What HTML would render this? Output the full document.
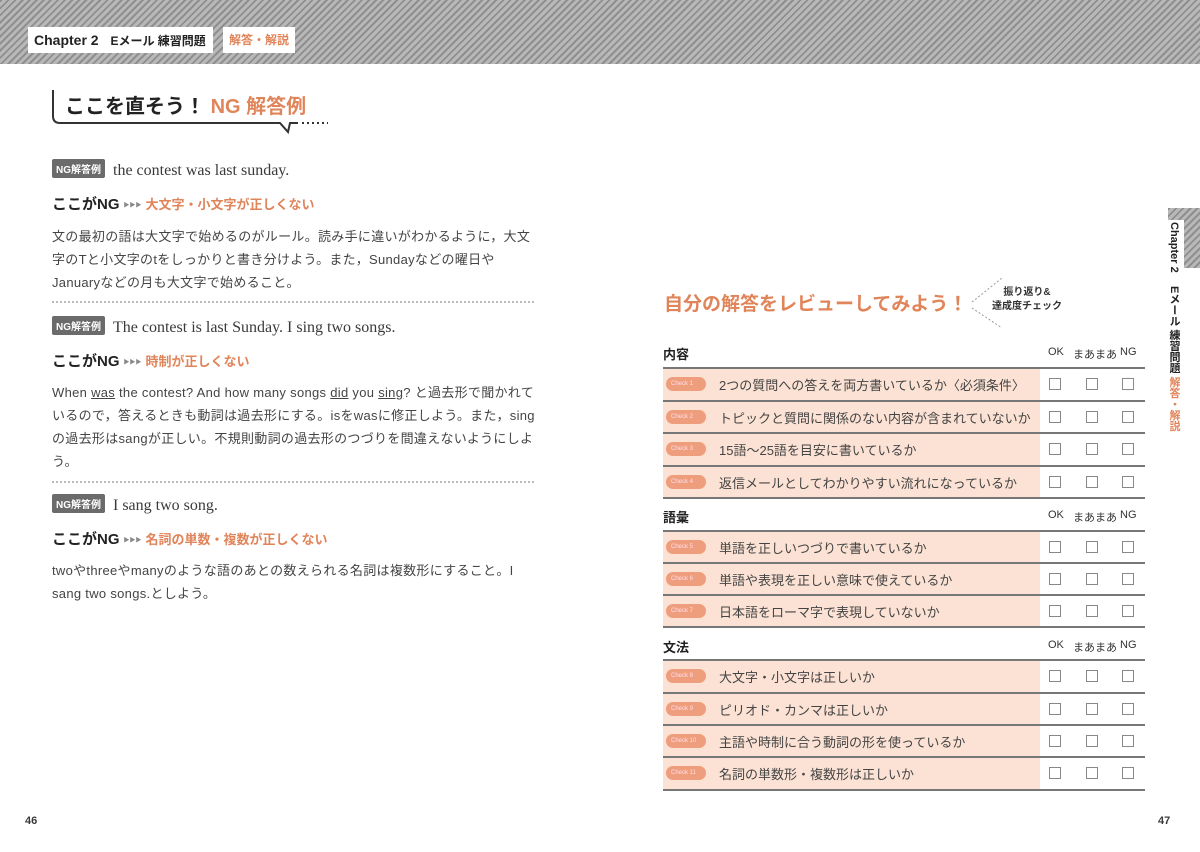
<!DOCTYPE html>
<html><head><meta charset="utf-8"><style>
*{margin:0;padding:0;box-sizing:border-box}
body{width:1200px;height:852px;background:#fff;position:relative;overflow:hidden;font-family:"Liberation Sans","Noto Sans CJK JP",sans-serif;color:#3a3a3a}
.hatch{background:repeating-linear-gradient(135deg,#8f8f8f 0 2px,#b8b8b8 2px 5px)}
.a{position:absolute;white-space:nowrap}
.or{color:#e0845a}
.tag{display:inline-block;background:#6b6b6b;color:#fff;font-size:10px;font-weight:bold;padding:2px 4px;border-radius:2px;margin-right:8px;vertical-align:2px}
.ser{font-family:"Liberation Serif","Noto Serif CJK SC",serif;font-size:16px}
.h{font-size:15px;font-weight:bold;color:#222}
.arr{font-size:6px;color:#888;letter-spacing:0;margin:0 4px;vertical-align:2px}
.p{font-size:13px;line-height:23px;width:486px;white-space:normal;color:#444;letter-spacing:.3px}
.dot{position:absolute;left:52px;width:482px;border-top:2px dotted #bbb}
.line{position:absolute;left:663px;width:482px;border-top:2px solid #777}
.peach{position:absolute;left:663px;width:377px;background:#fbe2d4}
.row{position:absolute;left:663px;height:32px;display:flex;align-items:center;font-size:13px;color:#444}
.ck{display:inline-block;width:40px;height:14px;border-radius:7px;background:#ee9e7c;margin:0 13px 0 3px;color:#fde;font-size:6px;line-height:14px;padding-left:5px}
.bx{position:absolute;width:12px;height:12px;border:1px solid #888}
.sec{position:absolute;left:663px;font-size:13px;font-weight:bold;color:#222}
.col{position:absolute;font-size:11px;color:#333}
</style></head><body>
<div class="a hatch" style="left:0;top:0;width:1200px;height:64px"></div>
<div class="a" style="left:28px;top:27px;width:185px;height:26px;background:#fff;font-size:14px;font-weight:bold;line-height:26px;padding-left:6px;color:#222">Chapter 2 <span style="font-size:12px;margin-left:8px">Eメール 練習問題</span></div>
<div class="a or" style="left:223px;top:27px;width:72px;height:26px;background:#fff;font-size:12px;font-weight:bold;line-height:26px;text-align:center">解答・解説</div>

<svg class="a" style="left:50px;top:88px" width="280" height="50"><path d="M3 2 V28 Q3 35 10 35 H230 L238 44 L240 35 H248" fill="none" stroke="#333" stroke-width="2"/><path d="M252 35 H278" stroke="#333" stroke-width="2" stroke-dasharray="2 3"/></svg>
<div class="a" style="left:65px;top:90px;font-size:20px;font-weight:bold;color:#222">ここを直そう！ <span class="or">NG 解答例</span></div>

<div class="a" style="left:52px;top:159px"><span class="tag">NG解答例</span><span class="ser">the contest was last sunday.</span></div>
<div class="a h" style="left:52px;top:193px">ここがNG<span class="arr">▶▶▶</span><span class="or" style="font-size:13px">大文字・小文字が正しくない</span></div>
<div class="a p" style="left:52px;top:225px">文の最初の語は大文字で始めるのがルール。読み手に違いがわかるように，大文字のTと小文字のtをしっかりと書き分けよう。また，Sundayなどの曜日やJanuaryなどの月も大文字で始めること。</div>
<div class="dot" style="top:301px"></div>

<div class="a" style="left:52px;top:316px"><span class="tag">NG解答例</span><span class="ser">The contest is last Sunday. I sing two songs.</span></div>
<div class="a h" style="left:52px;top:350px">ここがNG<span class="arr">▶▶▶</span><span class="or" style="font-size:13px">時制が正しくない</span></div>
<div class="a p" style="left:52px;top:381px">When <u>was</u> the contest? And how many songs <u>did</u> you <u>sing</u>? と過去形で聞かれているので，答えるときも動詞は過去形にする。isをwasに修正しよう。また，singの過去形はsangが正しい。不規則動詞の過去形のつづりを間違えないようにしよう。</div>
<div class="dot" style="top:481px"></div>

<div class="a" style="left:52px;top:494px"><span class="tag">NG解答例</span><span class="ser">I sang two song.</span></div>
<div class="a h" style="left:52px;top:528px">ここがNG<span class="arr">▶▶▶</span><span class="or" style="font-size:13px">名詞の単数・複数が正しくない</span></div>
<div class="a p" style="left:52px;top:559px">twoやthreeやmanyのような語のあとの数えられる名詞は複数形にすること。I sang two songs.としよう。</div>

<div class="a" style="left:25px;top:815px;font-size:11px;font-weight:bold">46</div>
<div class="a" style="left:1158px;top:815px;font-size:11px;font-weight:bold">47</div>

<div class="a hatch" style="left:1168px;top:208px;width:32px;height:60px"></div>
<div class="a" style="left:1164px;top:220px;width:20px;height:50px;background:#fff"></div>
<div class="a" style="left:1166px;top:222px;writing-mode:vertical-rl;font-size:11px;font-weight:bold;color:#222">Chapter 2 <span style="margin-top:10px;display:inline-block">Eメール 練習問題</span> <span class="or">解答・解説</span></div>

<div class="a or" style="left:664px;top:289px;font-size:19px;font-weight:bold">自分の解答をレビューしてみよう！</div>
<svg class="a" style="left:970px;top:274px" width="40" height="60"><path d="M2 28 L32 4 M2 34 L32 54" stroke="#999" stroke-dasharray="2 2"/></svg>
<div class="a" style="left:992px;top:286px;font-size:10px;font-weight:bold;line-height:14px;text-align:center;color:#333">振り返り&amp;<br>達成度チェック</div>

<div class="sec" style="top:344px">内容</div>
<div class="col" style="left:1048px;top:346px">OK</div><div class="col" style="left:1073px;top:346px">まあまあ</div><div class="col" style="left:1120px;top:346px">NG</div>
<div class="peach" style="top:369px;height:129px"></div>
<div class="line" style="top:367px"></div>
<div class="row" style="top:368px"><span class="ck">Check 1</span>2つの質問への答えを両方書いているか〈必須条件〉</div>
<div class="line" style="top:400px"></div>
<div class="row" style="top:401px"><span class="ck">Check 2</span>トピックと質問に関係のない内容が含まれていないか</div>
<div class="line" style="top:432px"></div>
<div class="row" style="top:433px"><span class="ck">Check 3</span>15語～25語を目安に書いているか</div>
<div class="line" style="top:465px"></div>
<div class="row" style="top:466px"><span class="ck">Check 4</span>返信メールとしてわかりやすい流れになっているか</div>
<div class="line" style="top:497px"></div>

<div class="sec" style="top:507px">語彙</div>
<div class="col" style="left:1048px;top:509px">OK</div><div class="col" style="left:1073px;top:509px">まあまあ</div><div class="col" style="left:1120px;top:509px">NG</div>
<div class="peach" style="top:532px;height:95px"></div>
<div class="line" style="top:530px"></div>
<div class="row" style="top:531px"><span class="ck">Check 5</span>単語を正しいつづりで書いているか</div>
<div class="line" style="top:562px"></div>
<div class="row" style="top:563px"><span class="ck">Check 6</span>単語や表現を正しい意味で使えているか</div>
<div class="line" style="top:594px"></div>
<div class="row" style="top:595px"><span class="ck">Check 7</span>日本語をローマ字で表現していないか</div>
<div class="line" style="top:626px"></div>

<div class="sec" style="top:637px">文法</div>
<div class="col" style="left:1048px;top:639px">OK</div><div class="col" style="left:1073px;top:639px">まあまあ</div><div class="col" style="left:1120px;top:639px">NG</div>
<div class="peach" style="top:661px;height:128px"></div>
<div class="line" style="top:659px"></div>
<div class="row" style="top:660px"><span class="ck">Check 8</span>大文字・小文字は正しいか</div>
<div class="line" style="top:692px"></div>
<div class="row" style="top:693px"><span class="ck">Check 9</span>ピリオド・カンマは正しいか</div>
<div class="line" style="top:724px"></div>
<div class="row" style="top:725px"><span class="ck">Check 10</span>主語や時制に合う動詞の形を使っているか</div>
<div class="line" style="top:756px"></div>
<div class="row" style="top:757px"><span class="ck">Check 11</span>名詞の単数形・複数形は正しいか</div>
<div class="line" style="top:789px"></div>

<div class="bx" style="left:1049px;top:378px"></div><div class="bx" style="left:1086px;top:378px"></div><div class="bx" style="left:1122px;top:378px"></div>
<div class="bx" style="left:1049px;top:411px"></div><div class="bx" style="left:1086px;top:411px"></div><div class="bx" style="left:1122px;top:411px"></div>
<div class="bx" style="left:1049px;top:443px"></div><div class="bx" style="left:1086px;top:443px"></div><div class="bx" style="left:1122px;top:443px"></div>
<div class="bx" style="left:1049px;top:476px"></div><div class="bx" style="left:1086px;top:476px"></div><div class="bx" style="left:1122px;top:476px"></div>
<div class="bx" style="left:1049px;top:541px"></div><div class="bx" style="left:1086px;top:541px"></div><div class="bx" style="left:1122px;top:541px"></div>
<div class="bx" style="left:1049px;top:573px"></div><div class="bx" style="left:1086px;top:573px"></div><div class="bx" style="left:1122px;top:573px"></div>
<div class="bx" style="left:1049px;top:605px"></div><div class="bx" style="left:1086px;top:605px"></div><div class="bx" style="left:1122px;top:605px"></div>
<div class="bx" style="left:1049px;top:670px"></div><div class="bx" style="left:1086px;top:670px"></div><div class="bx" style="left:1122px;top:670px"></div>
<div class="bx" style="left:1049px;top:703px"></div><div class="bx" style="left:1086px;top:703px"></div><div class="bx" style="left:1122px;top:703px"></div>
<div class="bx" style="left:1049px;top:735px"></div><div class="bx" style="left:1086px;top:735px"></div><div class="bx" style="left:1122px;top:735px"></div>
<div class="bx" style="left:1049px;top:767px"></div><div class="bx" style="left:1086px;top:767px"></div><div class="bx" style="left:1122px;top:767px"></div>
</body></html>
